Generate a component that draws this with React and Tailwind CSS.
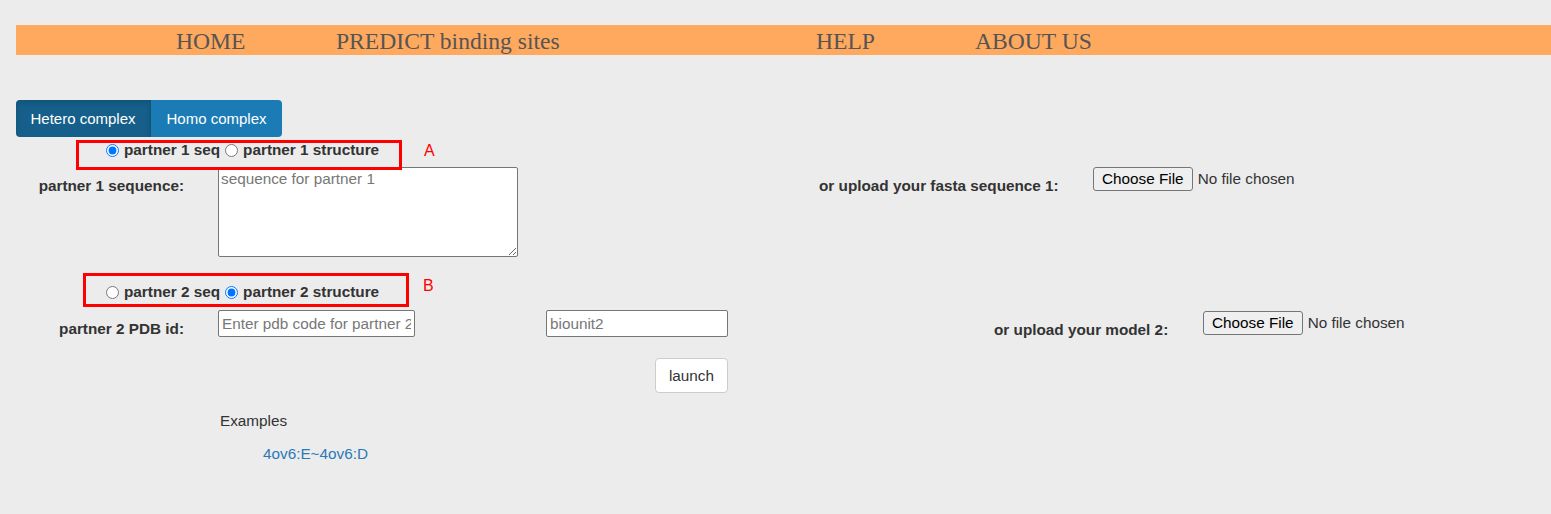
import { useState } from 'react'

const NAV = [
  { label: 'HOME', w: 'w-[160px]' },
  { label: 'PREDICT binding sites', w: 'w-[480px]' },
  { label: 'HELP', w: 'w-[159px]' },
  { label: 'ABOUT US', w: 'w-[200px]' },
]

export default function App() {
  const [mode, setMode] = useState('hetero')
  const [p1, setP1] = useState('seq')
  const [p2, setP2] = useState('structure')

  return (
    <div className="min-h-screen bg-[#ececec] text-[#333] font-['Liberation_Sans',Arial,sans-serif] text-[15.3px] leading-[20px]">
      {/* Top nav */}
      <div className="pt-[25px] pl-4">
        <nav className="h-[30px] bg-[#ffa95e] flex items-center pt-[2px] pl-[160px] font-['Liberation_Serif',Georgia,serif] text-[23.6px] text-[#555]">
          {NAV.map(n => (
            <a key={n.label} href="#" className={`${n.w} shrink-0 whitespace-nowrap`}>
              {n.label}
            </a>
          ))}
        </nav>
      </div>

      <div className="pl-4">
        {/* Tabs */}
        <div className="mt-[45px] flex">
          <button
            onClick={() => setMode('hetero')}
            className="h-[37px] w-[135px] rounded-l-[4px] bg-[#155f8a] text-white text-[15px] shadow-[inset_0_3px_5px_rgba(0,0,0,0.125)] border-r border-[#10547c]"
          >
            Hetero complex
          </button>
          <button
            onClick={() => setMode('homo')}
            className="h-[37px] w-[131px] rounded-r-[4px] bg-[#1b7bb5] text-white text-[15px]"
          >
            Homo complex
          </button>
        </div>

        {/* Partner 1 choice */}
        <div className="relative h-[30px]">
          <div className="flex items-center h-[26px] ml-[90px] font-bold">
            <input type="radio" name="p1" checked={p1 === 'seq'} onChange={() => setP1('seq')} className="w-[13px] h-[13px]" />
            <span className="ml-[5px]">partner 1 seq</span>
            <input type="radio" name="p1" checked={p1 === 'structure'} onChange={() => setP1('structure')} className="ml-[5px] w-[13px] h-[13px]" />
            <span className="ml-[5px]">partner 1 structure</span>
          </div>
          <div className="absolute left-[60px] top-[3px] w-[326px] h-[30px] border-[3px] border-[#f00]" />
          <span className="absolute left-[408px] top-[4px] text-[#f00] text-[16px]">A</span>
        </div>

        {/* Partner 1 sequence */}
        <div className="flex items-start">
          <label className="w-[168px] mt-[9px] text-right font-bold whitespace-nowrap">partner 1 sequence:</label>
          <textarea
            placeholder="sequence for partner 1"
            className="ml-[34px] w-[300px] h-[90px] bg-white border border-[#767676] rounded-[2px] px-[2px] py-[1px] placeholder:text-[#777] resize-y"
          />
          <label className="ml-[301px] w-[274px] mt-[9px] font-bold whitespace-nowrap">or upload your fasta sequence 1:</label>
          <FileButton />
        </div>

        {/* Partner 2 choice */}
        <div className="relative h-[53px] pt-[24px]">
          <div className="flex items-center h-[22px] ml-[90px] font-bold">
            <input type="radio" name="p2" checked={p2 === 'seq'} onChange={() => setP2('seq')} className="w-[13px] h-[13px]" />
            <span className="ml-[5px]">partner 2 seq</span>
            <input type="radio" name="p2" checked={p2 === 'structure'} onChange={() => setP2('structure')} className="ml-[5px] w-[13px] h-[13px]" />
            <span className="ml-[5px]">partner 2 structure</span>
          </div>
          <div className="absolute left-[67px] top-[16px] w-[326px] h-[34px] border-[3px] border-[#f00]" />
          <span className="absolute left-[407px] top-[19px] text-[#f00] text-[16px]">B</span>
        </div>

        {/* Partner 2 PDB id */}
        <div className="flex items-start">
          <label className="w-[168px] mt-[9px] text-right font-bold whitespace-nowrap">partner 2 PDB id:</label>
          <input
            type="text"
            placeholder="Enter pdb code for partner 2"
            className="ml-[34px] w-[197px] h-[27px] bg-white border border-[#767676] rounded-[2px] px-[3px] placeholder:text-[#777]"
          />
          <input
            type="text"
            placeholder="biounit2"
            className="ml-[131px] w-[182px] h-[27px] bg-white border border-[#767676] rounded-[2px] px-[3px] placeholder:text-[#777]"
          />
          <label className="ml-[266px] w-[209px] mt-[10px] font-bold whitespace-nowrap">or upload your model 2:</label>
          <div className="mt-[1px]">
            <FileButton />
          </div>
        </div>

        {/* Launch */}
        <div className="mt-[18px] ml-[639px]">
          <button className="w-[73px] h-[35px] bg-white border border-[#ccc] rounded-[4px] text-[#333]">
            launch
          </button>
        </div>

        <p className="mt-[18px] ml-[204px]">Examples</p>
        <a href="#" className="block mt-[13px] ml-[247px] text-[#2a7ab8]">4ov6:E~4ov6:D</a>
      </div>
    </div>
  )
}

function FileButton() {
  return (
    <div className="flex items-center whitespace-nowrap">
      <span className="h-[24px] px-[8px] flex items-center bg-[#efefef] border border-[#767676] rounded-[3px] text-black">
        Choose File
      </span>
      <span className="ml-[5px] mb-[1px]">No file chosen</span>
    </div>
  )
}
